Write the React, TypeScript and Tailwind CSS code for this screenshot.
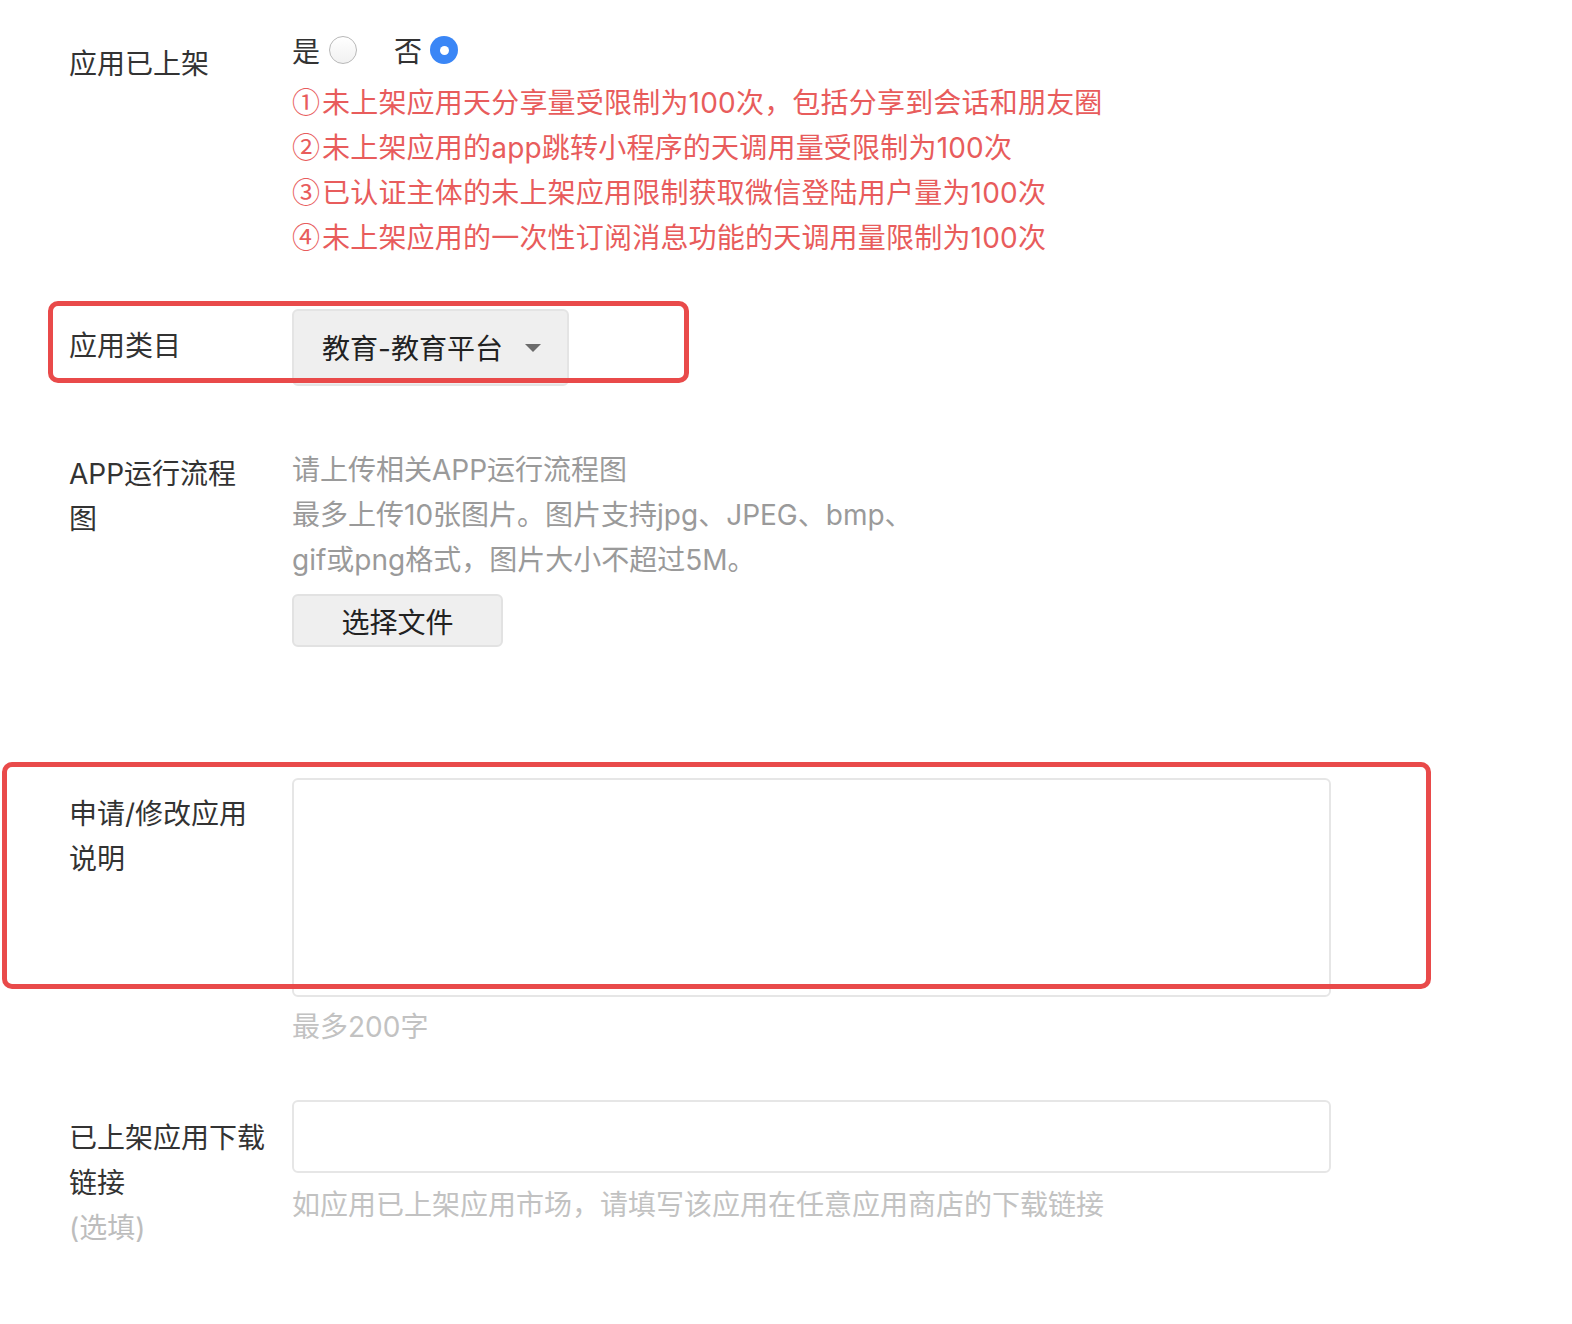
import React from "react";

const font = {
  fontFamily: '"Inter", "Noto Sans CJK SC", sans-serif',
};

function Radio({ checked }: { checked?: boolean }) {
  if (checked) {
    return (
      <div className="w-[28px] h-[28px] rounded-full bg-[#3a86f6] flex items-center justify-center">
        <div className="w-[9px] h-[9px] rounded-full bg-white" />
      </div>
    );
  }
  return (
    <div className="w-[28px] h-[28px] rounded-full border border-[#b8b8b8] bg-gradient-to-b from-white to-[#f1f1f1]" />
  );
}

function Line({ n, children }: { n: string; children: React.ReactNode }) {
  return (
    <div className="h-[45px] whitespace-nowrap">
      <span className="leading-none tracking-[2px] font-['Noto_Sans_CJK_SC',sans-serif]">{n}</span>
      <span className="tracking-[0.2px]">{children}</span>
    </div>
  );
}

export default function App() {
  return (
    <div
      className="relative w-[1572px] h-[1324px] bg-white text-[28px] leading-[45px] text-[#333333] overflow-hidden"
      style={font}
    >
      <div className="pl-[69px] flex flex-col">
        {/* Row 1 */}
        <div className="flex pt-[27px]">
          <div className="w-[223px] pt-[15px]">应用已上架</div>
          <div className="flex-1 flex flex-col">
            <div className="h-[46px] flex items-center">
              <span className="mt-[4px]">是</span>
              <div className="ml-[9px]">
                <Radio />
              </div>
              <span className="ml-[37px] mt-[4px]">否</span>
              <div className="ml-[8px]">
                <Radio checked />
              </div>
            </div>
            <div className="mt-[8px] text-[#e85c5c]">
              <Line n="①">未上架应用天分享量受限制为100次，包括分享到会话和朋友圈</Line>
              <Line n="②">未上架应用的app跳转小程序的天调用量受限制为100次</Line>
              <Line n="③">已认证主体的未上架应用限制获取微信登陆用户量为100次</Line>
              <Line n="④">未上架应用的一次性订阅消息功能的天调用量限制为100次</Line>
            </div>
          </div>
        </div>

        {/* Row 2 */}
        <div className="flex mt-[48px]">
          <div className="w-[223px] pt-[15px]">应用类目</div>
          <div className="flex-1">
            <div className="w-[277px] h-[77px] rounded-[6px] border-2 border-[#e4e4e4] bg-[#efefef] flex items-center pl-[28px] pt-[4px] text-[#222222]">
              <span>教育-教育平台</span>
              <div className="ml-[22px] -mt-[4px] w-0 h-0 border-l-[8px] border-r-[8px] border-t-[8px] border-l-transparent border-r-transparent border-t-[#6b6b6b]" />
            </div>
          </div>
        </div>

        {/* Row 3 */}
        <div className="flex mt-[62px]">
          <div className="w-[223px] pt-[4px]">
            APP运行流程
            <br />图
          </div>
          <div className="flex-1 flex flex-col">
            <div className="text-[#9a9a9a]">
              <div>请上传相关APP运行流程图</div>
              <div>最多上传10张图片。图片支持jpg、JPEG、bmp、</div>
              <div>gif或png格式，图片大小不超过5M。</div>
            </div>
            <div className="mt-[11px] w-[211px] h-[53px] rounded-[6px] border-2 border-[#e2e2e2] bg-[#efefef] flex items-center justify-center pt-[5px] text-[#222222]">
              选择文件
            </div>
          </div>
        </div>

        {/* Row 4 */}
        <div className="flex mt-[131px]">
          <div className="w-[223px] pt-[14px]">
            申请/修改应用
            <br />
            说明
          </div>
          <div className="flex-1 flex flex-col">
            <textarea className="w-[1039px] h-[219px] rounded-[6px] border-2 border-[#e6e6e6] bg-white resize-none outline-none" />
            <div className="mt-[8px] text-[#c2c2c2]">最多200字</div>
          </div>
        </div>

        {/* Row 5 */}
        <div className="flex mt-[50px]">
          <div className="w-[223px] pt-[16px]">
            已上架应用下载
            <br />
            链接
            <div className="text-[#bdbdbd]">(选填)</div>
          </div>
          <div className="flex-1 flex flex-col">
            <input
              className="w-[1039px] h-[73px] rounded-[6px] border-2 border-[#e6e6e6] bg-white outline-none"
              type="text"
            />
            <div className="mt-[10px] text-[#c2c2c2]">
              如应用已上架应用市场，请填写该应用在任意应用商店的下载链接
            </div>
          </div>
        </div>
      </div>

      {/* annotation overlays */}
      <div className="absolute left-[48px] top-[301px] w-[641px] h-[82px] border-[5px] border-[#e94a4a] rounded-[10px] pointer-events-none" />
      <div className="absolute left-[2px] top-[762px] w-[1429px] h-[227px] border-[5px] border-[#e94a4a] rounded-[10px] pointer-events-none" />
    </div>
  );
}
